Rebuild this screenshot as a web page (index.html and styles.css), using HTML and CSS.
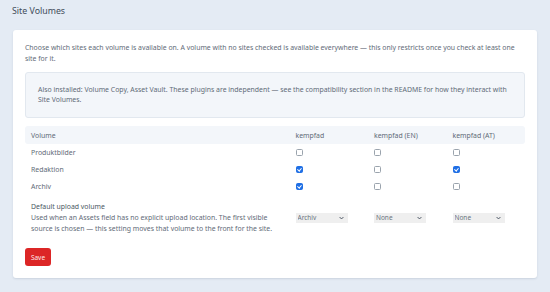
FILE: index.html
```html
<!DOCTYPE html>
<html>
<head>
  <meta charset="UTF-8" />
  <title>Site Volumes</title>
  <link rel="stylesheet" href="styles.css">
</head>
<body>
  <h1 class="page-title">Site Volumes</h1>

  <div class="card">
    <p class="intro">Choose which sites each volume is available on. A volume with no sites checked is available everywhere &mdash; this only restricts once you check at least one site for it.</p>

    <div class="notice">
      Also installed: Volume Copy, Asset Vault. These plugins are independent &mdash; see the compatibility section in the README for how they interact with Site Volumes.
    </div>

    <table class="volumes">
      <thead>
        <tr>
          <th>Volume</th>
          <th class="site-col">kempfad</th>
          <th class="site-col">kempfad (EN)</th>
          <th class="site-col">kempfad (AT)</th>
        </tr>
      </thead>
      <tbody>
        <tr>
          <td>Produktbilder</td>
          <td><input type="checkbox" class="check"></td>
          <td><input type="checkbox" class="check"></td>
          <td><input type="checkbox" class="check"></td>
        </tr>
        <tr>
          <td>Redaktion</td>
          <td><input type="checkbox" class="check" checked></td>
          <td><input type="checkbox" class="check"></td>
          <td><input type="checkbox" class="check" checked></td>
        </tr>
        <tr>
          <td>Archiv</td>
          <td><input type="checkbox" class="check" checked></td>
          <td><input type="checkbox" class="check"></td>
          <td><input type="checkbox" class="check"></td>
        </tr>
        <tr class="upload-row">
          <td>
            <div class="upload-label">Default upload volume</div>
            <div class="upload-help">Used when an Assets field has no explicit upload location. The first visible source is chosen &mdash; this setting moves that volume to the front for the site.</div>
          </td>
          <td>
            <div class="select">
              <select><option>Archiv</option><option>None</option></select>
              <svg viewBox="0 0 8 6" width="5" height="4"><path d="M1 1.5 L4 4.5 L7 1.5" fill="none" stroke="#4b5563" stroke-width="1.6"/></svg>
            </div>
          </td>
          <td>
            <div class="select">
              <select><option>None</option></select>
              <svg viewBox="0 0 8 6" width="5" height="4"><path d="M1 1.5 L4 4.5 L7 1.5" fill="none" stroke="#4b5563" stroke-width="1.6"/></svg>
            </div>
          </td>
          <td>
            <div class="select">
              <select><option>None</option></select>
              <svg viewBox="0 0 8 6" width="5" height="4"><path d="M1 1.5 L4 4.5 L7 1.5" fill="none" stroke="#4b5563" stroke-width="1.6"/></svg>
            </div>
          </td>
        </tr>
      </tbody>
    </table>

    <button class="save-btn">Save</button>
  </div>
</body>
</html>
```

FILE: styles.css
```css
* {
  margin: 0;
  padding: 0;
  box-sizing: border-box;
}
body {
  background: #e4ebf4;
  font-family: "Noto Sans", "Liberation Sans", sans-serif;
  font-size: 6.9px;
  color: #5f6b78;
  padding: 6px 13px 13px 13px;
}
.page-title {
  font-size: 8.8px;
  font-weight: normal;
  color: #3f4c5a;
  line-height: 11px;
  margin-left: -1px;
  margin-bottom: 13px;
}
.card {
  background: white;
  border-radius: 3px;
  box-shadow: 0 1px 2px rgba(60, 80, 110, 0.15);
  padding: 12px;
}
.intro {
  line-height: 11px;
  margin-bottom: 8px;
}
.notice {
  background: #f3f6fa;
  border: 1px solid #e2e8ef;
  border-radius: 3px;
  padding: 12px;
  line-height: 10px;
  font-size: 6.9px;
  margin-bottom: 8px;
}
.volumes {
  width: 100%;
  border-collapse: collapse;
}
.volumes th {
  background: #f3f6fa;
  font-weight: normal;
  text-align: left;
  height: 18px;
  padding: 0 6px;
  color: #5f6b78;
}
.volumes th:first-child {
  border-radius: 3px 0 0 3px;
}
.volumes th:last-child {
  border-radius: 0 3px 3px 0;
}
.volumes .site-col {
  width: 78.5px;
}
.volumes td {
  height: 17px;
  padding: 0 6px;
  vertical-align: middle;
}
.check {
  appearance: none;
  width: 7px;
  height: 7px;
  border: 1px solid #9aa3ad;
  border-radius: 1.5px;
  display: block;
  background: white;
  position: relative;
}
.check:checked {
  background: #1f6fe5;
  border-color: #1f6fe5;
}
.check:checked::after {
  content: "";
  position: absolute;
  left: 1.5px;
  top: 0;
  width: 1.5px;
  height: 3px;
  border: solid white;
  border-width: 0 1px 1px 0;
  transform: rotate(40deg);
}
.upload-row td {
  padding-top: 6px;
  padding-bottom: 6px;
}
.upload-label {
  line-height: 11px;
  color: #4a5764;
}
.upload-help {
  line-height: 11px;
}
.select {
  position: relative;
  width: 52px;
  height: 10px;
  background: #efefef;
}
.select select {
  appearance: none;
  border: none;
  background: transparent;
  font-family: "Noto Sans", "Liberation Sans", sans-serif;
  font-size: 6.5px;
  color: #6b7580;
  width: 100%;
  height: 10px;
  padding: 0 0 0 2px;
  outline: none;
}
.select svg {
  position: absolute;
  right: 4px;
  top: 3px;
}
.save-btn {
  display: block;
  margin-top: 8px;
  background: #dc2626;
  color: #fde8e8;
  border: none;
  border-radius: 3px;
  font-family: "Noto Sans", "Liberation Sans", sans-serif;
  font-size: 6.5px;
  width: 26px;
  height: 18px;
}
```
